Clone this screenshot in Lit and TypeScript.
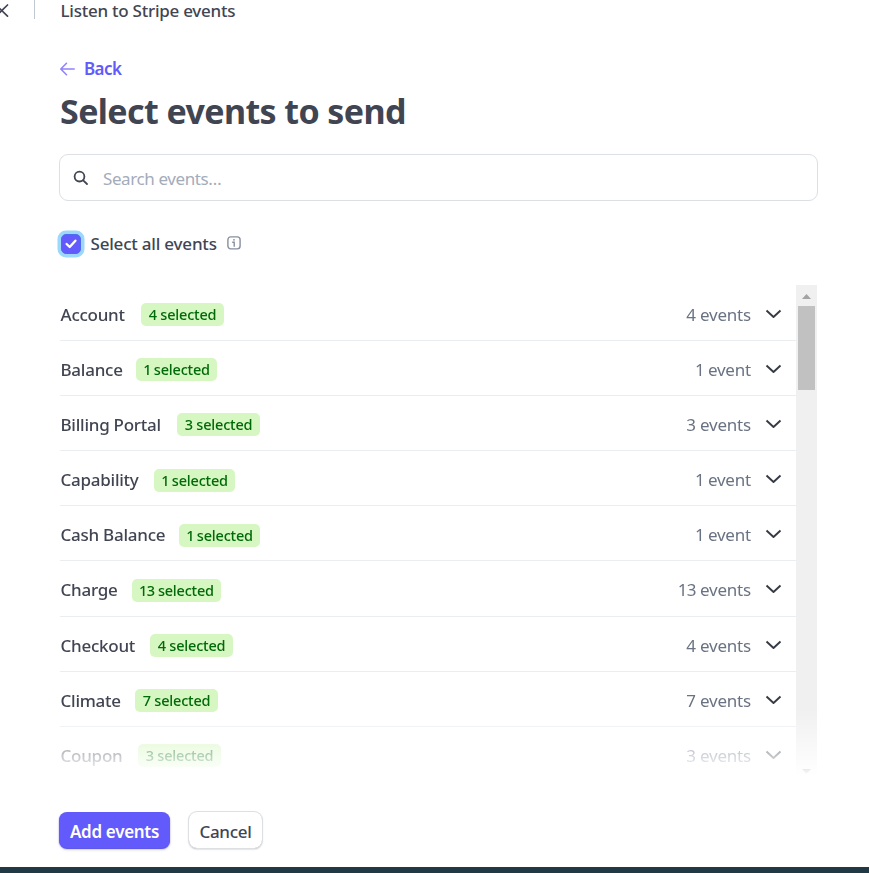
import { LitElement, html, css } from "lit";
import { customElement, property } from "lit/decorators.js";
import { classMap } from "lit/directives/class-map.js";
import { styleMap } from "lit/directives/style-map.js";

interface EventGroup {
  name: string;
  count: number;
  nameWidth: number;
}

const GROUPS: EventGroup[] = [
  { name: "Account", count: 4, nameWidth: 66 },
  { name: "Balance", count: 1, nameWidth: 61 },
  { name: "Billing Portal", count: 3, nameWidth: 102 },
  { name: "Capability", count: 1, nameWidth: 79 },
  { name: "Cash Balance", count: 1, nameWidth: 104 },
  { name: "Charge", count: 13, nameWidth: 57 },
  { name: "Checkout", count: 4, nameWidth: 75 },
  { name: "Climate", count: 7, nameWidth: 60 },
  { name: "Coupon", count: 3, nameWidth: 63 },
];

@customElement("event-row")
class EventRow extends LitElement {
  @property() name = "";
  @property({ type: Number }) count = 0;
  @property({ type: Number }) nameWidth = 0;

  static styles = css`
    :host {
      display: flex;
      align-items: center;
      box-sizing: border-box;
      height: 55.17px;
      flex: none;
      padding: 2.6px 14px 0 0.5px;
      border-bottom: 1px solid #ebeef1;
      white-space: nowrap;
    }
    .name {
      font-size: 17px;
      font-weight: 500;
      letter-spacing: -0.25px;
      color: #414552;
    }
    .badge {
      box-sizing: border-box;
      width: 83px;
      text-align: center;
      margin: 1px 0 0 14.5px;
      height: 23px;
      line-height: 23px;
      border-radius: 5px;
      background: #d7f7c2;
      color: #006908;
      font-size: 14.5px;
      font-weight: 500;
      letter-spacing: -0.2px;
    }
    .badge.single {
      width: 81px;
    }
    .badge.wide {
      width: 89px;
    }
    .single .digits {
      letter-spacing: -1.2px;
    }
    .wide .digits {
      letter-spacing: -0.7px;
    }
    .count {
      margin-left: auto;
      font-size: 17px;
      letter-spacing: -0.2px;
      color: #6a7383;
    }
    .chevron {
      margin: -1px 0 0 14px;
      width: 17px;
      height: 12px;
      flex: none;
    }
  `;

  render() {
    const digitClasses = { single: this.count === 1, wide: this.count > 9 };
    return html`
      <span class="name" style=${styleMap({ width: `${this.nameWidth}px` })}>${this.name}</span>
      <span class=${classMap({ badge: true, ...digitClasses })}><span class="digits">${this.count}</span> selected</span>
      <span class=${classMap({ count: true, ...digitClasses })}
        ><span class="digits">${this.count}</span> ${this.count === 1 ? "event" : "events"}</span
      >
      <svg class="chevron" viewBox="0 0 17 12" fill="none" stroke="#353a44" stroke-width="1.9" stroke-linejoin="round">
        <path d="M1.5 2.5 L8.5 9 L15.5 2.5" />
      </svg>
    `;
  }
}

@customElement("app-root")
class AppRoot extends LitElement {
  static styles = css`
    :host {
      display: flex;
      flex-direction: column;
      box-sizing: border-box;
      height: 873px;
      width: 869px;
      overflow: hidden;
      background: #fff;
      color: #414552;
      font-family: "Noto Sans", "Open Sans", sans-serif;
      font-size: 17px;
      white-space: nowrap;
    }
    .top {
      display: flex;
      height: 22px;
      flex: none;
    }
    .close {
      width: 34px;
      height: 22px;
    }
    .divider {
      width: 1px;
      height: 19px;
      background: #c0c8d2;
      margin-right: 25.5px;
    }
    .top-title {
      line-height: 22px;
      font-weight: 500;
      letter-spacing: -0.25px;
    }
    .content {
      display: flex;
      flex-direction: column;
      flex: 1;
      padding: 35px 51px 0 59px;
    }
    .back {
      display: flex;
      align-items: center;
      height: 23px;
      color: #625afa;
      font-weight: 600;
      letter-spacing: -0.6px;
    }
    .back svg {
      width: 17px;
      height: 16px;
      margin-right: 8px;
    }
    h1 {
      margin: 8px 0 0 1px;
      height: 46px;
      line-height: 46px;
      font-size: 34px;
      font-weight: 700;
      letter-spacing: -0.6px;
    }
    .search {
      display: flex;
      align-items: center;
      box-sizing: border-box;
      height: 47px;
      width: 759px;
      margin-top: 20px;
      padding-left: 13px;
      border: 1px solid #dcdfe3;
      border-radius: 9px;
      color: #a3acba;
      letter-spacing: -0.4px;
    }
    .search svg {
      width: 16px;
      height: 16px;
      margin-right: 14px;
    }
    .placeholder {
      padding-top: 2px;
    }
    .all {
      display: flex;
      align-items: center;
      height: 26px;
      margin-top: 30px;
      font-weight: 500;
      letter-spacing: -0.2px;
    }
    .all-label {
      margin-top: -2px;
    }
    .check {
      display: flex;
      align-items: center;
      justify-content: center;
      box-sizing: border-box;
      width: 20px;
      height: 20px;
      margin: 0 9.5px 0 2px;
      border-radius: 5px;
      background: #625afa;
      border: 1px solid #4f6bf0;
      box-shadow: 0 0 0 3.5px #9cd8fb;
    }
    .check svg {
      width: 14px;
      height: 12px;
    }
    .info {
      width: 14px;
      height: 14px;
      margin: -3px 0 0 10.5px;
    }
    .list {
      display: flex;
      height: 491px;
      width: 758px;
      margin-top: 28px;
      overflow: hidden;
      -webkit-mask-image: linear-gradient(#000 0 424px, transparent 491px);
      mask-image: linear-gradient(#000 0 424px, transparent 491px);
    }
    .rows {
      display: flex;
      flex-direction: column;
      flex: 1;
      margin-left: 1px;
      padding-top: 0.7px;
    }
    .scrollbar {
      display: flex;
      flex-direction: column;
      align-items: center;
      width: 21px;
      background: #f0f0f0;
    }
    .arrow {
      width: 9px;
      height: 5px;
      margin: 9px 0 7px;
      background: #a3a3a3;
      clip-path: polygon(50% 0, 100% 100%, 0 100%);
    }
    .thumb {
      width: 17px;
      height: 84px;
      background: #c1c1c1;
    }
    .arrow.down {
      margin: auto 0 2px;
      background: #303030;
      clip-path: polygon(0 0, 100% 0, 50% 100%);
    }
    .actions {
      display: flex;
      gap: 19px;
      margin-top: 36px;
    }
    .button {
      box-sizing: border-box;
      height: 36px;
      line-height: 39px;
      border-radius: 8px;
      text-align: center;
    }
    .primary {
      width: 111px;
      background: #625afa;
      color: #fff;
      font-weight: 600;
      letter-spacing: -0.3px;
      box-shadow: 0 1px 1px #5149e8, 0 2px 3px rgba(0, 0, 0, 0.14);
    }
    .secondary {
      width: 73px;
      font-weight: 500;
      letter-spacing: -0.3px;
      box-shadow: 0 0 0 1px #dddfe3, 0 1px 2px rgba(0, 0, 0, 0.35);
    }
    .footer {
      height: 6px;
      flex: none;
      background: #213944;
    }
  `;

  render() {
    return html`
      <header class="top">
        <svg class="close" viewBox="0 0 34 22" fill="none" stroke="#414552" stroke-width="1.7" stroke-linecap="round">
          <path d="M-4 5 L7.5 16.2 M7.5 5 L-4 16.2" />
        </svg>
        <div class="divider"></div>
        <div class="top-title">Listen to Stripe events</div>
      </header>
      <main class="content">
        <div class="back">
          <svg viewBox="0 0 17 16" fill="none" stroke="#9184fb" stroke-width="1.6" stroke-linecap="round" stroke-linejoin="round">
            <path d="M15.2 8 H2 M7.5 2.3 L1.8 8 L7.5 13.7" />
          </svg>
          <span class="back-label">Back</span>
        </div>
        <h1>Select events to send</h1>
        <div class="search">
          <svg viewBox="0 0 16 16" fill="none" stroke="#414552" stroke-width="1.8" stroke-linecap="round">
            <circle cx="6.5" cy="6.6" r="4.9" />
            <path d="M10.2 10.3 L14 14" />
          </svg>
          <span class="placeholder">Search events…</span>
        </div>
        <div class="all">
          <span class="check">
            <svg viewBox="0 0 14 12" fill="none" stroke="#fff" stroke-width="2.4" stroke-linecap="round" stroke-linejoin="round">
              <path d="M2.6 6 L5.7 9 L11.4 2.7" />
            </svg>
          </span>
          <span class="all-label">Select all events</span>
          <svg class="info" viewBox="0 0 14 14" fill="none" stroke="#87909f" stroke-width="1.4">
            <rect x="0.9" y="0.9" width="12.2" height="12" rx="2.8" />
            <path d="M5.2 6.2 H7.2 V10.8" />
            <circle cx="7" cy="3.8" r="0.9" fill="#87909f" stroke="none" />
          </svg>
        </div>
        <div class="list">
          <div class="rows">
            ${GROUPS.map(
              (g) => html`<event-row .name=${g.name} .count=${g.count} .nameWidth=${g.nameWidth}></event-row>`
            )}
          </div>
          <div class="scrollbar">
            <div class="arrow"></div>
            <div class="thumb"></div>
            <div class="arrow down"></div>
          </div>
        </div>
        <div class="actions">
          <div class="button primary">Add events</div>
          <div class="button secondary">Cancel</div>
        </div>
      </main>
      <div class="footer"></div>
    `;
  }
}
